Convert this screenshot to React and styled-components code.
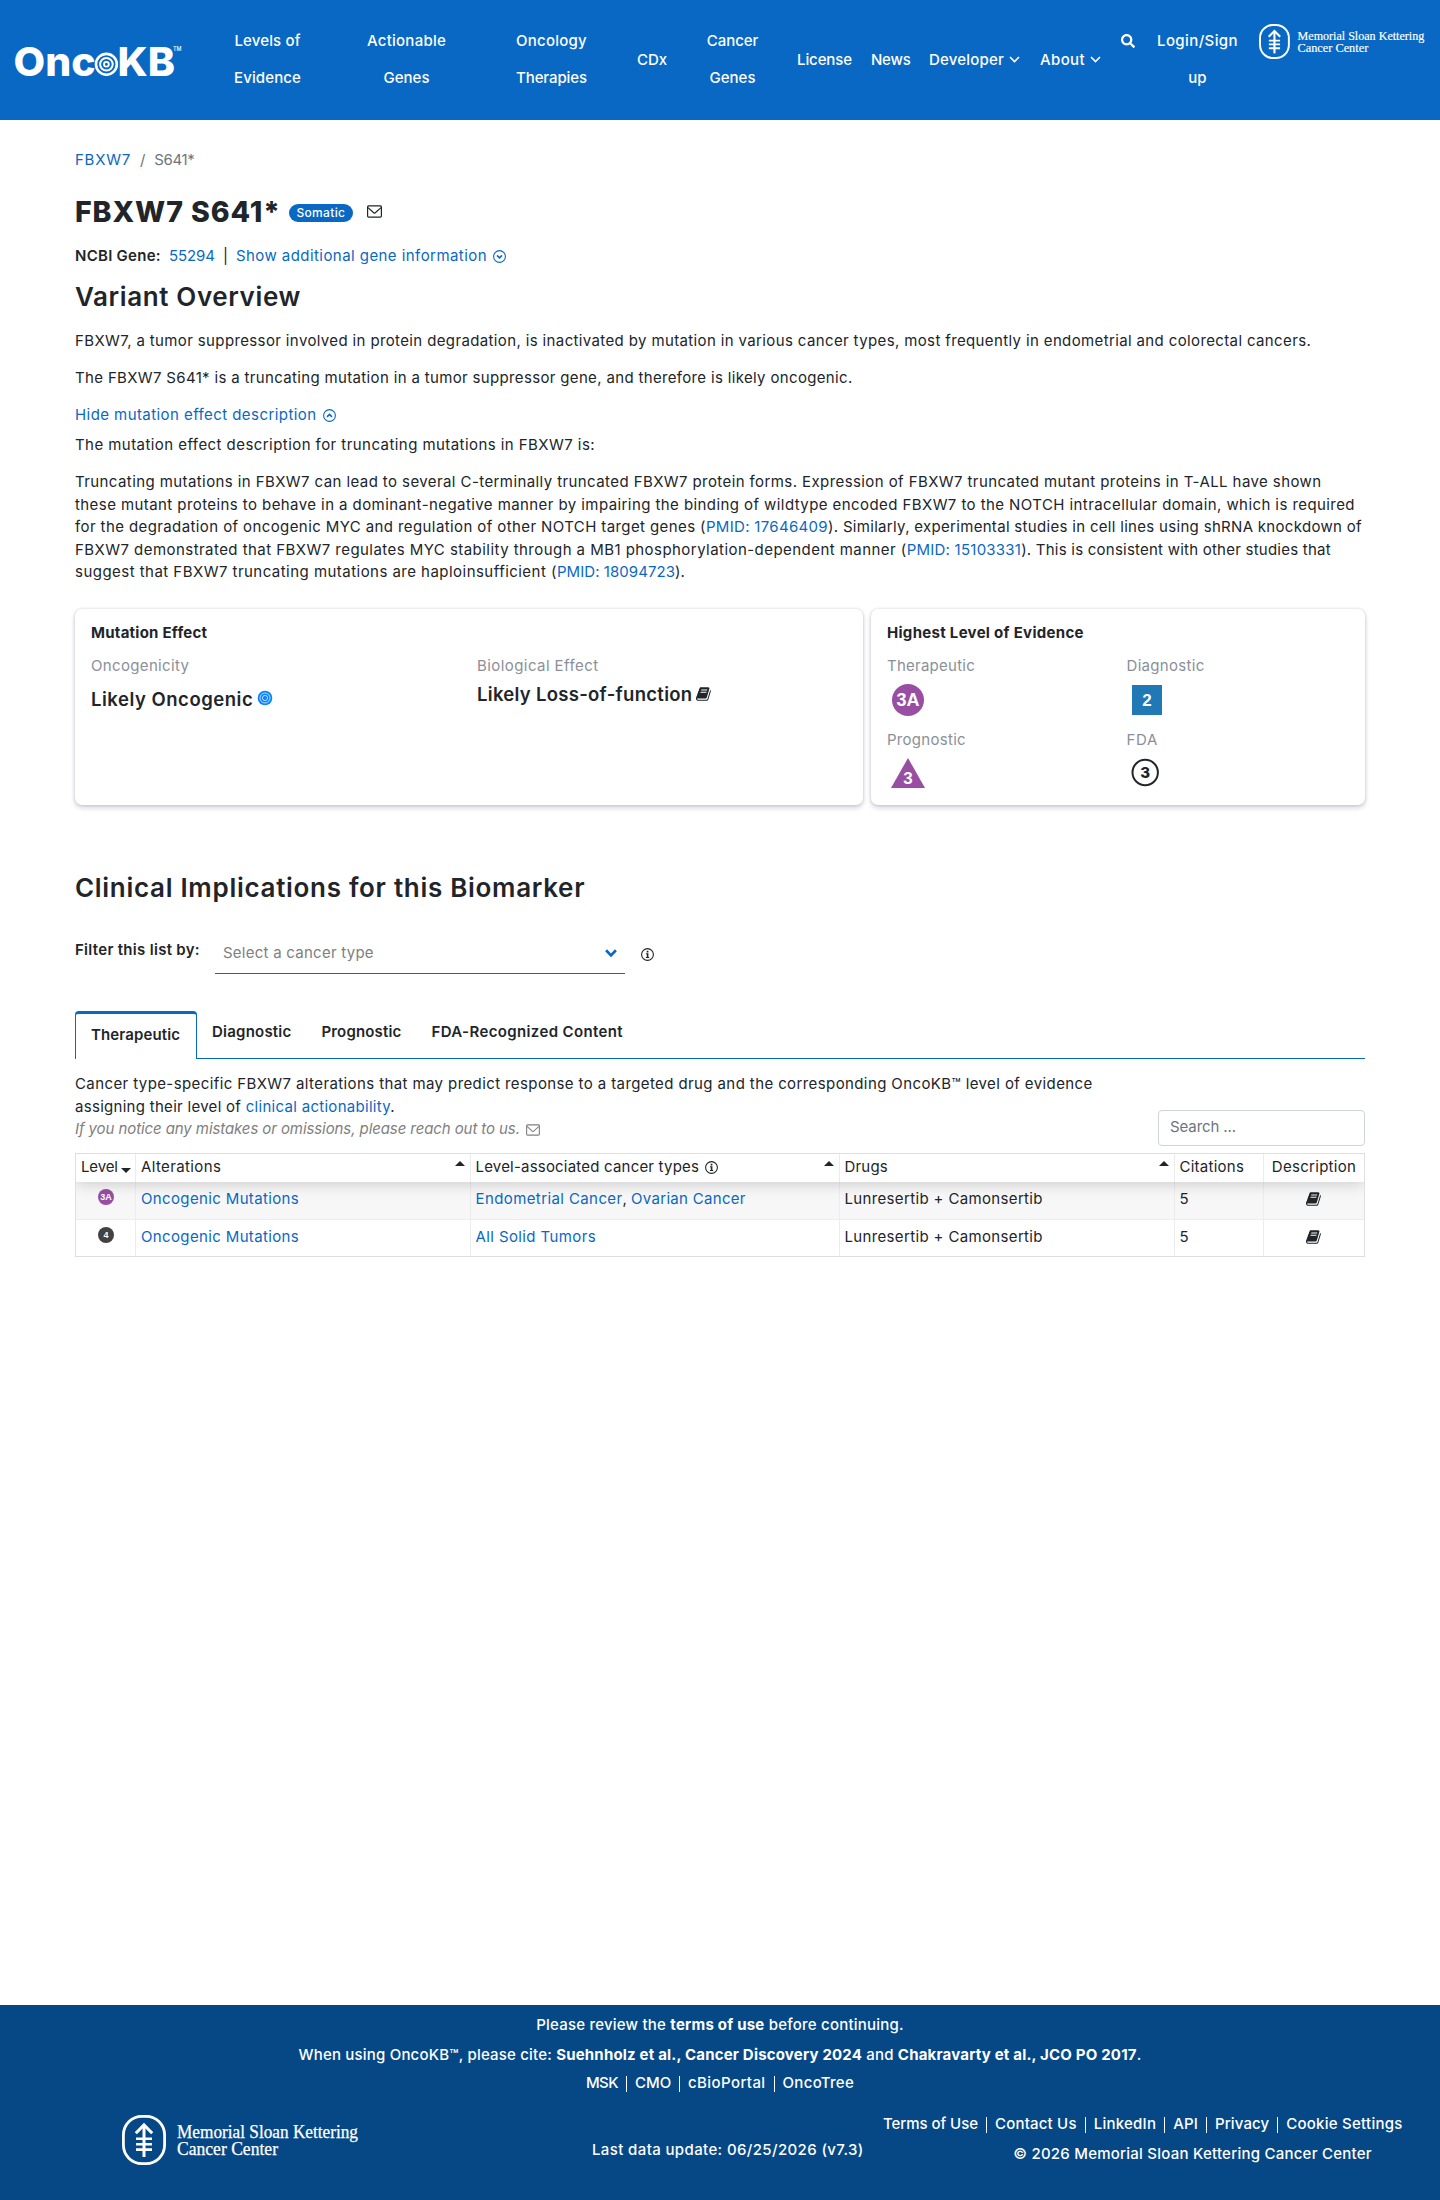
import React from 'react'
import styled, { createGlobalStyle, css } from 'styled-components'
import { FaSearch } from 'react-icons/fa'

const GlobalStyle = createGlobalStyle`
  * { box-sizing: border-box; }
  body {
    margin: 0;
    background: #fff;
    color: #212529;
    font-family: Inter, "Open Sans", sans-serif;
    font-size: 15px;
    line-height: 22.5px;
  }
  h1, h2, p { margin: 0; }
  svg { display: block; overflow: visible; }
`

// single line of text, tracking differs per use
const T = styled.span`
  letter-spacing: ${(p) => p.$ls || 0}px;
  white-space: nowrap;
`

const Page = styled.div`
  min-height: 2200px;
  display: flex;
  flex-direction: column;
`

// ---------- header ----------
const HeaderBar = styled.header`
  height: 120px;
  background: #0968c3;
  color: #fff;
  display: flex;
  font-weight: 500;
`
const Brand = styled.div`
  width: 234px;
  padding: 42px 0 0 14px;
`
const NavItem = styled.div`
  width: ${(p) => p.$w}px;
  margin-right: ${(p) => p.$gap}px;
  padding-top: ${(p) => (p.$single ? 40.5 : 22)}px;
  line-height: 37px;
  white-space: nowrap;
  display: flex;
  flex-direction: column;
  align-items: center;
`
const Row = styled.div`
  display: flex;
  align-items: center;
  gap: ${(p) => p.$gap || 0}px;
`
const SearchIcon = styled.div`
  padding-top: 34px;
  width: 14px;
  margin-right: 22px;
`
const HeaderLogo = styled.div`
  padding-top: 24px;
`

// ---------- page body ----------
const Main = styled.main`
  flex: 1;
  padding: 29px 75px 0;
`
const Link = styled.a`
  color: #0968c3;
`
const Breadcrumb = styled.nav`
  display: flex;
  gap: 9px;
  color: #6c757d;
`
const TitleRow = styled.div`
  display: flex;
  align-items: center;
  height: 34px;
  margin-top: 23px;
`
const Title = styled.h1`
  font-size: 28.5px;
  line-height: 34px;
  font-weight: 800;
`
const SomaticTag = styled.span`
  width: 64px;
  height: 18px;
  margin: 3px 14px 0 8px;
  border-radius: 9px;
  background: #0968c3;
  color: #fff;
  font-size: 12px;
  line-height: 18px;
  font-weight: 500;
  text-align: center;
`
const GeneInfo = styled.div`
  display: flex;
  align-items: center;
  gap: 8px;
  margin-top: 16.5px;
`
const Heading = styled.h2`
  font-size: 26px;
  line-height: 31px;
  font-weight: 600;
  margin-top: ${(p) => p.$mt}px;
`
const Para = styled.p`
  margin-top: ${(p) => p.$mt}px;
`
const Strong = styled.span`
  font-weight: ${(p) => p.$weight || 600};
`

const Cards = styled.section`
  display: grid;
  grid-template-columns: 788px 494px;
  grid-template-rows: 196px;
  gap: 8px;
  margin-top: 25.3px;
`
const Card = styled.div`
  border-radius: 7px;
  background: #fff;
  box-shadow: 0 0 3px rgba(20, 20, 60, 0.18), 0 3px 5px rgba(20, 20, 80, 0.18);
  padding: 13px 16px 0;
`
const CardGrid = styled.div`
  display: grid;
  grid-template-columns: ${(p) => p.$cols};
  margin-top: 10.5px;
`
const Label = styled.div`
  color: #8b8f99;
`
const Effect = styled.div`
  display: flex;
  align-items: center;
  gap: 4px;
  height: 28px;
  margin-top: ${(p) => p.$mt}px;
  font-size: 18.5px;
  font-weight: 600;
`
const Mark = styled.div`
  height: 32px;
  margin-top: 7px;
  padding-left: ${(p) => p.$pl || 4}px;
  & + ${Label} { margin-top: 12.3px; }
`

const FilterRow = styled.div`
  display: flex;
  height: 39px;
  margin-top: 32.3px;
`
const FilterLabel = styled.label`
  width: 140px;
  padding-top: 4px;
  font-weight: 600;
`
const CancerSelect = styled.div`
  width: 410px;
  border-bottom: 1px solid #0968c3;
  padding: 1px 8px 4px;
  color: #808080;
  display: flex;
  align-items: center;
  justify-content: space-between;
`
const FilterInfo = styled.div`
  padding: 13px 0 0 16px;
`
const Tabs = styled.div`
  display: flex;
  height: 48px;
  margin-top: 36.7px;
`
const Tab = styled.div`
  font-weight: 600;
  padding: 10px 15px 0;
  border-bottom: 1px solid #0968c3;
  ${(p) =>
    p.$active &&
    css`
      width: 122px;
      border: 1px solid #0968c3;
      border-top-width: 3px;
      border-bottom: 0;
      border-radius: 4px 4px 0 0;
    `}
`
const TabsRest = styled.div`
  flex: 1;
  border-bottom: 1px solid #0968c3;
`
const Intro = styled.div`
  display: flex;
  justify-content: space-between;
  align-items: flex-end;
  height: 72.5px;
  margin-top: 14.5px;
`
const IntroText = styled.div`
  align-self: flex-start;
`
const Notice = styled.div`
  display: flex;
  align-items: center;
  gap: 6px;
  color: #808080;
  font-style: italic;
`
const SearchBox = styled.div`
  width: 207px;
  height: 36px;
  border: 1px solid #ced4da;
  border-radius: 4px;
  padding: 5px 11px;
  color: #6c757d;
`

const Table = styled.div`
  margin-top: 7px;
  border: 1px solid #dfdfdf;
  height: 104px;
`
const TableRow = styled.div`
  display: grid;
  grid-template-columns: 60px 334.5px 369px 335px 89.5px 1fr;
  height: ${(p) => p.$h}px;
  background: ${(p) => (p.$odd ? '#f7f7f7' : '#fff')};
  ${(p) =>
    p.$head &&
    css`
      position: relative;
      box-shadow: 0 2px 15px rgba(0, 0, 0, 0.18);
      clip-path: inset(0 0 -20px 0);
    `}
  ${(p) => p.$odd && 'border-bottom: 1px solid #ededed;'}
`
const Cell = styled.div`
  border-right: 1px solid ${(p) => (p.$last ? 'transparent' : '#ececec')};
  padding: ${(p) => p.$pt}px 6px 0 ${(p) => (p.$center ? 7 : 5)}px;
  display: flex;
  justify-content: ${(p) => (p.$center ? 'center' : 'space-between')};
  align-items: flex-start;
`
const Caret = styled.i`
  width: 0;
  height: 0;
  border: 5px solid transparent;
  border-top-width: 0;
  border-bottom: 5px solid #212529;
  margin: 5px -1px 0 0;
  ${(p) =>
    p.$down &&
    css`
      border-top: 5px solid #212529;
      border-bottom-width: 0;
      margin: 12px -2px 0 0;
    `}
`

// ---------- footer ----------
const FooterBar = styled.footer`
  height: 195px;
  background: #064885;
  color: #fff;
  font-weight: 500;
`
const FooterLine = styled.div`
  display: flex;
  justify-content: center;
  padding: ${(p) => p.$pt}px 0 0 ${(p) => p.$pl || 0}px;
`
const Piped = styled.span`
  display: flex;
  height: 16px;
  line-height: 14px;
  margin-top: 4px;
  padding: 0 8px;
  & + & { border-left: 1px solid #fff; }
`
const FooterBottom = styled.div`
  display: grid;
  grid-template-columns: 122px 470px 283px 1fr;
`
const FooterCol = styled.div`
  padding-top: ${(p) => p.$pt}px;
`

// ---------- icons ----------
const Envelope = ({ width = 15, height = 13 }) => (
  <svg width={width} height={height} viewBox="0 0 15 13" fill="none" stroke="currentColor" strokeWidth="1.2" strokeLinejoin="round">
    <rect x="0.6" y="0.9" width="13.8" height="11.2" rx="1" />
    <path d="M1 2.6 L7 8 Q7.5 8.4 8 8 L14 2.6" />
  </svg>
)
const CircleChevron = ({ up }) => (
  <svg width="13" height="13" viewBox="0 0 13 13" fill="none" stroke="currentColor">
    <circle cx="6.5" cy="6.5" r="5.9" strokeWidth="1.1" />
    <path d={up ? 'M4 7.8 L6.5 5.4 L9 7.8' : 'M4 5.4 L6.5 7.8 L9 5.4'} strokeWidth="1.6" />
  </svg>
)
const Info = () => (
  <svg width="13" height="13" viewBox="0 0 13 13" fill="#212529">
    <circle cx="6.5" cy="6.5" r="5.9" fill="none" stroke="#212529" strokeWidth="1.1" />
    <path d="M5.7 2.8h1.7v1.6H5.7zM4.9 5.3h2.5v3.6h.8v1H4.9v-1h.9V6.2h-.9z" />
  </svg>
)
const Chevron = ({ w = 11, h = 7, sw = 1.6, color = '#fff' }) => (
  <svg width={w} height={h} viewBox="0 0 11 7" fill="none" stroke={color} strokeWidth={sw}>
    <path d="M1 1 L5.5 5.6 L10 1" />
  </svg>
)
const Book = () => (
  <svg width="16" height="16" viewBox="0 0 1792 1792" fill="currentColor">
    <path d="M1639 478q40 57 18 129l-275 906q-19 64-76.5 107.5t-122.5 43.5h-923q-77 0-148.5-53.5t-99.5-131.5q-24-67-2-127 0-4 3-27t4-37q1-8-3-21.5t-3-19.5q2-11 8-21t16.5-23.5 16.5-23.5q23-38 45-91.5t30-91.5q3-10 .5-30t-.5-28q3-11 17-28t17-23q21-36 42-92t25-90q1-9-2.5-32t.5-28q4-13 22-30.5t22-22.5q19-26 42.5-84.5t27.5-96.5q1-8-3-25.5t-2-26.5q2-8 9-18t18-23 17-21q8-12 16.5-30.5t15-35 16-36 19.5-32 26.5-23.5 36-11.5 47.5 5.5l-1 3q38-9 51-9h761q74 0 114 56t18 130l-274 906q-36 119-71.5 153.5t-128.5 34.5h-869q-27 0-38 15-11 16-1 43 24 70 144 70h923q29 0 56-15.5t35-41.5l300-987q7-22 5-57 38 15 59 43zm-1064 2q-4 13 2 22.5t20 9.5h608q13 0 25.5-9.5t16.5-22.5l21-64q4-13-2-22.5t-20-9.5h-608q-13 0-25.5 9.5t-16.5 22.5zm-83 256q-4 13 2 22.5t20 9.5h608q13 0 25.5-9.5t16.5-22.5l21-64q4-13-2-22.5t-20-9.5h-608q-13 0-25.5 9.5t-16.5 22.5z" />
  </svg>
)
const OncogenicMark = () => (
  <svg width="15" height="17" viewBox="0 0 15 17" fill="none" stroke="#fff">
    <circle cx="8" cy="7" r="7.3" fill="#0a84ff" stroke="none" />
    <circle cx="8" cy="7" r="5" strokeWidth="0.7" />
    <circle cx="8" cy="7" r="2.6" strokeWidth="0.7" />
  </svg>
)
const LevelDot = ({ size, color, text }) => (
  <svg width={size} height={size} viewBox="0 0 32 32">
    <circle cx="16" cy="16" r="16" fill={color} />
    <text x="16" y="22.3" textAnchor="middle" fontFamily="Liberation Sans, sans-serif" fontWeight="700" fontSize="18" fill="#fff">{text}</text>
  </svg>
)
const OncoLogo = () => (
  <svg width="170" height="38" viewBox="14 42 170 38" fill="#fff" fontFamily="Inter, sans-serif">
    <text x="13.5" y="75.5" fontSize="40" fontWeight="800" textLength="82" lengthAdjust="spacingAndGlyphs">Onc</text>
    <g fill="none" stroke="#fff">
      <circle cx="106.4" cy="64.3" r="10.4" strokeWidth="2.6" />
      <circle cx="106.4" cy="64.3" r="6.3" strokeWidth="2" />
      <circle cx="106.4" cy="64.3" r="2.4" strokeWidth="1.8" />
    </g>
    <text x="117.5" y="75.5" fontSize="40" fontWeight="800" textLength="57.5" lengthAdjust="spacingAndGlyphs">KB</text>
    <text x="173" y="50.5" fontSize="6" fontWeight="500" textLength="8.5" lengthAdjust="spacingAndGlyphs">TM</text>
  </svg>
)
// emblem and wordmark share one drawing, 237 x 50
const MskLogo = ({ width, height }) => (
  <svg width={width} height={height} viewBox="0 0 237 50" fill="#fff">
    <g fill="none" stroke="#fff">
      <rect x="1.4" y="1.4" width="41.2" height="47.2" rx="18.5" strokeWidth="2.8" />
      <g strokeWidth="3">
        <path d="M22 10v32" />
        <path d="M13.8 18.3 L22 10 L30.2 18.3" />
        <path d="M14 23.8h16M14 29.2h16M14 34.6h16" strokeWidth="2.6" />
      </g>
    </g>
    <g fontFamily="Liberation Serif, serif" fontSize="18" stroke="#fff" strokeWidth="0.25">
      <text x="55" y="23" textLength="181" lengthAdjust="spacingAndGlyphs">Memorial Sloan Kettering</text>
      <text x="55" y="40" textLength="101" lengthAdjust="spacingAndGlyphs">Cancer Center</text>
    </g>
  </svg>
)

const navItems = [
  { w: 67, gap: 66, lines: [['Levels of', 0.14], ['Evidence', 0.12]] },
  { w: 79, gap: 70, lines: [['Actionable', 0.25], ['Genes', 0.01]] },
  { w: 71, gap: 50, lines: [['Oncology', 0.25], ['Therapies', -0.09]] },
  { w: 30, gap: 40, lines: [['CDx', -0.06]] },
  { w: 51, gap: 39, lines: [['Cancer', -0.05], ['Genes', 0.01]] },
  { w: 55, gap: 19, lines: [['License', -0.09]] },
  { w: 39.5, gap: 18.5, lines: [['News', -0.23]] },
  { w: 91, gap: 19.5, menu: true, lines: [['Developer', 0.2]] },
  { w: 62, gap: 19.5, menu: true, lines: [['About', 0.4]] },
]

function Header() {
  return (
    <HeaderBar>
      <Brand><OncoLogo /></Brand>
      {navItems.map((item, i) => (
        <NavItem key={i} $w={item.w} $gap={item.gap} $single={item.lines.length === 1}>
          {item.lines.map(([text, ls]) => (
            <Row key={text} $gap={5}>
              <T $ls={ls}>{text}</T>
              {item.menu && <Chevron />}
            </Row>
          ))}
        </NavItem>
      ))}
      <SearchIcon><FaSearch size={14} /></SearchIcon>
      <NavItem $w={81} $gap={21}>
        <T $ls={0.4}>Login/Sign</T>
        <T>up</T>
      </NavItem>
      <HeaderLogo><MskLogo width={166} height={35} /></HeaderLogo>
    </HeaderBar>
  )
}

const rows = [
  { level: '3A', color: '#984ea3', cancers: [['Endometrial Cancer', 0.4], ['Ovarian Cancer', 0.3]] },
  { level: '4', color: '#424242', cancers: [['All Solid Tumors', 0.39]] },
]

function EvidenceTable() {
  return (
    <Table>
      <TableRow $h={28} $head>
        <Cell $pt={2.3}><T $ls={-0.13}>Level</T><Caret $down /></Cell>
        <Cell $pt={2.3}><T $ls={0.38}>Alterations</T><Caret /></Cell>
        <Cell $pt={2.3}><Row $gap={6}><T $ls={0.2}>Level-associated cancer types</T><Info /></Row><Caret /></Cell>
        <Cell $pt={2.3}><T $ls={0.19}>Drugs</T><Caret /></Cell>
        <Cell $pt={2.3}><T $ls={0.25}>Citations</T></Cell>
        <Cell $pt={2.3} $center $last><T $ls={0.3}>Description</T></Cell>
      </TableRow>
      {rows.map((row, i) => (
        <TableRow key={row.level} $h={i === 0 ? 38 : 36} $odd={i === 0}>
          <Cell $pt={7} $center><LevelDot size={16} color={row.color} text={row.level} /></Cell>
          <Cell $pt={6}><Link><T $ls={0.36}>Oncogenic Mutations</T></Link></Cell>
          <Cell $pt={6}>
            <span>
              {row.cancers.map(([name, ls], j) => (
                <React.Fragment key={name}>{j > 0 && ', '}<Link><T $ls={ls}>{name}</T></Link></React.Fragment>
              ))}
            </span>
          </Cell>
          <Cell $pt={6}><T $ls={0.35}>Lunresertib + Camonsertib</T></Cell>
          <Cell $pt={6}><T>5</T></Cell>
          <Cell $pt={9} $center $last><Book /></Cell>
        </TableRow>
      ))}
    </Table>
  )
}

function Footer() {
  return (
    <FooterBar>
      <FooterLine $pt={8.5}><T $ls={0.22}>Please review the <Strong $weight={700}>terms of use</Strong> before continuing.</T></FooterLine>
      <FooterLine $pt={7.5}>
        <T $ls={0.19}>When using OncoKB™, please cite: <Strong $weight={700}>Suehnholz et al., Cancer Discovery 2024</Strong> and <Strong $weight={700}>Chakravarty et al., JCO PO 2017</Strong>.</T>
      </FooterLine>
      <FooterLine $pt={5.5}>
        <Piped><T $ls={-0.5}>MSK</T></Piped>
        <Piped><T $ls={-0.07}>CMO</T></Piped>
        <Piped><T $ls={0.4}>cBioPortal</T></Piped>
        <Piped><T $ls={0.3}>OncoTree</T></Piped>
      </FooterLine>
      <FooterBottom>
        <div />
        <FooterCol $pt={23.5}><MskLogo width={237} height={50} /></FooterCol>
        <FooterCol $pt={47.5}><T $ls={0.38}>Last data update: 06/25/2026 (v7.3)</T></FooterCol>
        <FooterCol $pt={21}>
          <Row>
            <Piped><T $ls={-0.05}>Terms of Use</T></Piped>
            <Piped><T $ls={0.2}>Contact Us</T></Piped>
            <Piped><T $ls={0.25}>LinkedIn</T></Piped>
            <Piped><T $ls={0.15}>API</T></Piped>
            <Piped><T $ls={0.11}>Privacy</T></Piped>
            <Piped><T $ls={0.25}>Cookie Settings</T></Piped>
          </Row>
          <FooterLine $pt={10} $pl={70}><T $ls={0.24}>© 2026 Memorial Sloan Kettering Cancer Center</T></FooterLine>
        </FooterCol>
      </FooterBottom>
    </FooterBar>
  )
}

export default function App() {
  return (
    <Page>
      <GlobalStyle />
      <Header />
      <Main>
        <Breadcrumb>
          <Link><T $ls={0.75}>FBXW7</T></Link>
          <span>/</span>
          <T $ls={-0.4}>S641*</T>
        </Breadcrumb>
        <TitleRow>
          <Title><T $ls={0.93}>FBXW7 S641*</T></Title>
          <SomaticTag><T $ls={0.35}>Somatic</T></SomaticTag>
          <Envelope />
        </TitleRow>
        <GeneInfo>
          <Strong><T $ls={0.27}>NCBI Gene:</T></Strong>
          <Link><T $ls={-0.08}>55294</T></Link>
          <span>|</span>
          <Link><Row $gap={6}><T $ls={0.44}>Show additional gene information</T><CircleChevron /></Row></Link>
        </GeneInfo>
        <Heading $mt={13}><T $ls={0.62}>Variant Overview</T></Heading>
        <Para $mt={18}>
          <T $ls={0.37}>FBXW7, a tumor suppressor involved in protein degradation, is inactivated by mutation in various cancer types, most frequently in endometrial and colorectal cancers.</T>
        </Para>
        <Para $mt={14.5}>
          <T $ls={0.34}>The FBXW7 S641* is a truncating mutation in a tumor suppressor gene, and therefore is likely oncogenic.</T>
        </Para>
        <Para as="div" $mt={15.3}>
          <Link><Row $gap={6}><T $ls={0.43}>Hide mutation effect description</T><CircleChevron up /></Row></Link>
        </Para>
        <Para $mt={7.5}><T $ls={0.44}>The mutation effect description for truncating mutations in FBXW7 is:</T></Para>
        <Para $mt={14.4}>
          <T $ls={0.412}>Truncating mutations in FBXW7 can lead to several C-terminally truncated FBXW7 protein forms. Expression of FBXW7 truncated mutant proteins in T-ALL have shown</T><br />
          <T $ls={0.422}>these mutant proteins to behave in a dominant-negative manner by impairing the binding of wildtype encoded FBXW7 to the NOTCH intracellular domain, which is required</T><br />
          <T $ls={0.4}>for the degradation of oncogenic MYC and regulation of other NOTCH target genes (</T>
          <T $ls={0.31}><Link>PMID: 17646409</Link>). Similarly, experimental studies in cell lines using shRNA knockdown of</T><br />
          <T $ls={0.45}>FBXW7 demonstrated that FBXW7 regulates MYC stability through a MB1 phosphorylation-dependent manner (</T>
          <T $ls={0.23}><Link>PMID: 15103331</Link>). This is consistent with other studies that</T><br />
          <T $ls={0.465}>suggest that FBXW7 truncating mutations are haploinsufficient (</T>
          <T $ls={0.06}><Link>PMID: 18094723</Link>).</T>
        </Para>

        <Cards>
          <Card>
            <Strong $weight={700}><T $ls={0.25}>Mutation Effect</T></Strong>
            <CardGrid $cols="386px 1fr">
              <div>
                <Label><T $ls={0.34}>Oncogenicity</T></Label>
                <Effect $mt={8}><T $ls={0.52}>Likely Oncogenic</T><OncogenicMark /></Effect>
              </div>
              <div>
                <Label><T $ls={0.43}>Biological Effect</T></Label>
                <Effect $mt={2.3}><T $ls={0.29}>Likely Loss-of-function</T><Book /></Effect>
              </div>
            </CardGrid>
          </Card>
          <Card>
            <Strong $weight={700}><T $ls={0.3}>Highest Level of Evidence</T></Strong>
            <CardGrid $cols="239.5px 1fr">
              <div>
                <Label><T $ls={0.25}>Therapeutic</T></Label>
                <Mark $pl={5}><LevelDot size={32} color="#984ea3" text="3A" /></Mark>
                <Label><T $ls={0.29}>Prognostic</T></Label>
                <Mark>
                  <svg width="34" height="32" viewBox="0 0 34 32">
                    <path d="M17 0 L34 30 H0 z" fill="#984ea3" />
                    <text x="17" y="26" textAnchor="middle" fontFamily="Liberation Sans, sans-serif" fontWeight="700" fontSize="17" fill="#fff">3</text>
                  </svg>
                </Mark>
              </div>
              <div>
                <Label><T $ls={0.31}>Diagnostic</T></Label>
                <Mark>
                  <svg width="32" height="32" viewBox="0 0 32 32">
                    <rect x="1" y="1" width="30" height="30" fill="#2078b4" />
                    <text x="16" y="22" textAnchor="middle" fontFamily="Liberation Sans, sans-serif" fontWeight="700" fontSize="17" fill="#fff">2</text>
                  </svg>
                </Mark>
                <Label><T $ls={0.65}>FDA</T></Label>
                <Mark>
                  <svg width="30" height="32" viewBox="0 0 30 32">
                    <circle cx="14.2" cy="14.5" r="12.7" fill="none" stroke="#212529" strokeWidth="2" />
                    <text x="14.2" y="19.8" textAnchor="middle" fontFamily="Inter, sans-serif" fontWeight="800" fontSize="15" fill="#212529">3</text>
                  </svg>
                </Mark>
              </div>
            </CardGrid>
          </Card>
        </Cards>

        <Heading $mt={67}><T $ls={0.7}>Clinical Implications for this Biomarker</T></Heading>
        <FilterRow>
          <FilterLabel><T $ls={0.3}>Filter this list by:</T></FilterLabel>
          <CancerSelect>
            <T $ls={0.25}>Select a cancer type</T>
            <Chevron w={12} h={8} sw={2.4} color="#0968c3" />
          </CancerSelect>
          <FilterInfo><Info /></FilterInfo>
        </FilterRow>
        <Tabs>
          <Tab $active><T $ls={0.13}>Therapeutic</T></Tab>
          <Tab><T $ls={0.22}>Diagnostic</T></Tab>
          <Tab><T $ls={0.17}>Prognostic</T></Tab>
          <Tab><T $ls={0.37}>FDA-Recognized Content</T></Tab>
          <TabsRest />
        </Tabs>
        <Intro>
          <IntroText>
            <T $ls={0.397}>Cancer type-specific FBXW7 alterations that may predict response to a targeted drug and the corresponding OncoKB™ level of evidence</T><br />
            <T $ls={0.29}>assigning their level of <Link>clinical actionability</Link>.</T>
            <Notice><T $ls={-0.09}>If you notice any mistakes or omissions, please reach out to us.</T><Envelope width={14} height={12} /></Notice>
          </IntroText>
          <SearchBox><T $ls={-0.1}>Search ...</T></SearchBox>
        </Intro>
        <EvidenceTable />
      </Main>
      <Footer />
    </Page>
  )
}
